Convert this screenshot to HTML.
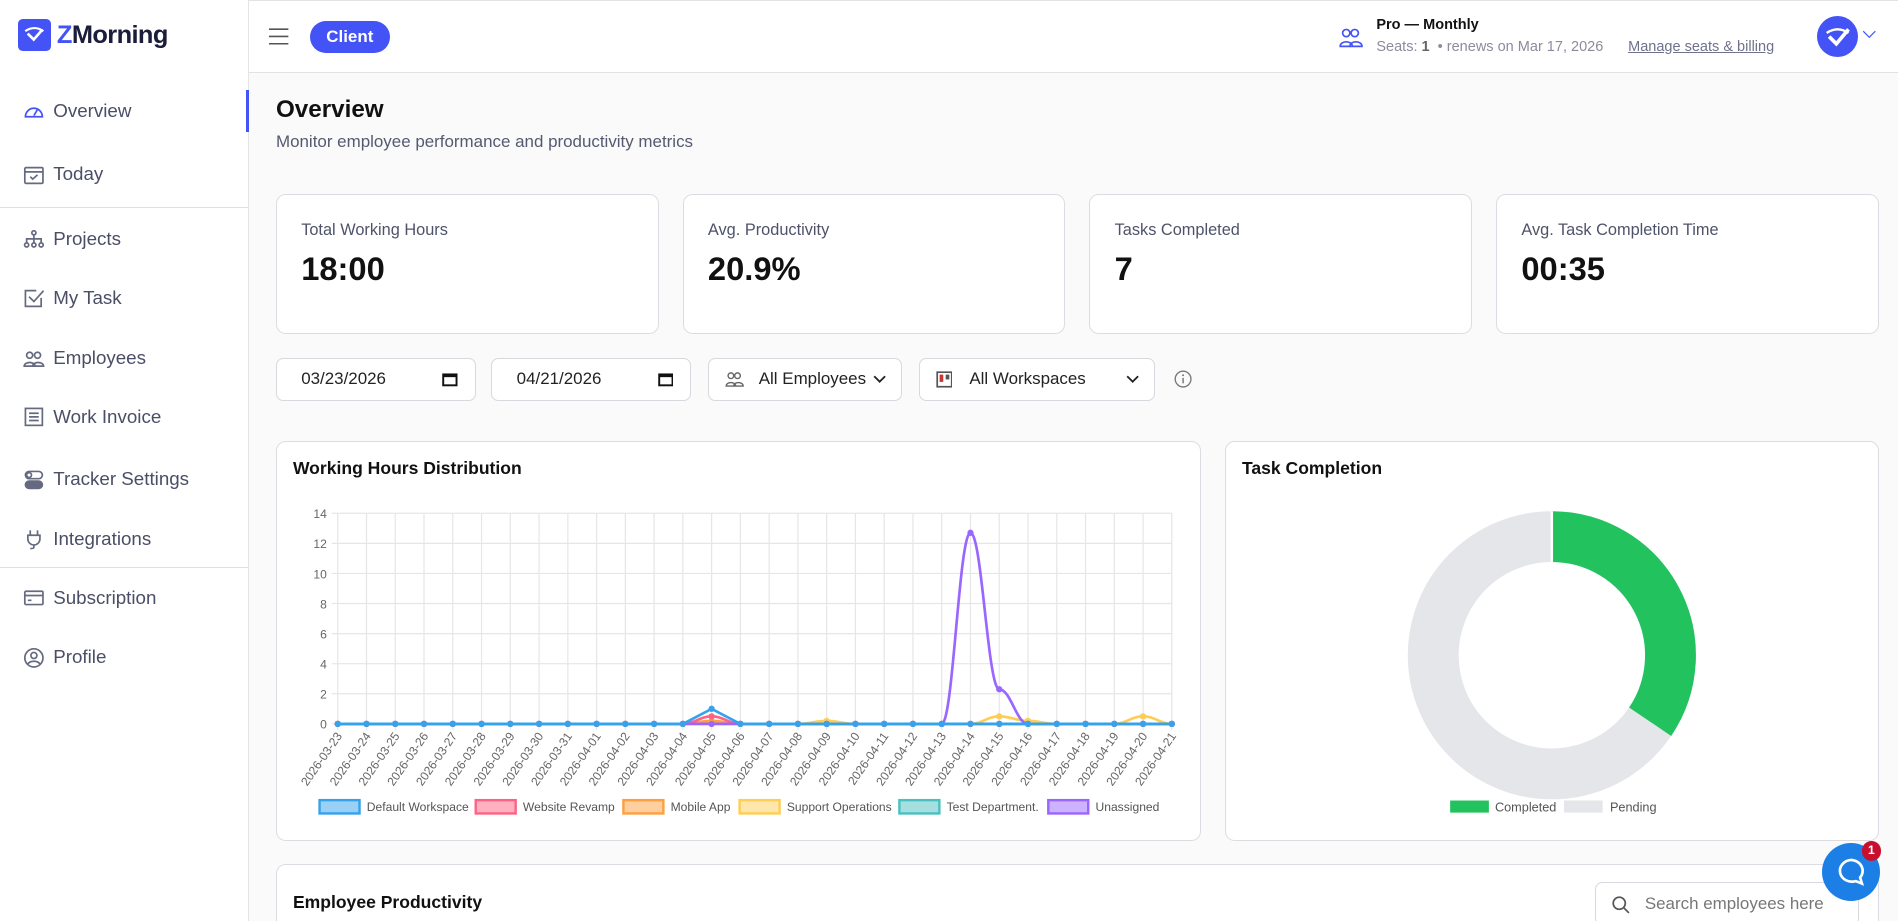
<!DOCTYPE html>
<html><head><meta charset="utf-8">
<style>
*{box-sizing:border-box;margin:0;padding:0}
html,body{width:1898px;height:921px;overflow:hidden;background:#fafafa}
#w{zoom:1.2105;width:1568px;height:761px;position:relative;font-family:"Liberation Sans",Arial,sans-serif;color:#111;background:#fafafa;overflow:hidden}
.abs{position:absolute}
#side{left:0;top:0;width:206px;height:761px;background:#fff;border-right:1px solid #e3e3e8}
.nav{position:absolute;left:19px;display:flex;align-items:center;font-size:15.5px;color:#4a4e66}
.nav svg{width:18px;height:18px;margin-right:7px;fill:none;stroke:#666a80;stroke-width:1.4}
.hr{position:absolute;left:0;width:206px;border-top:1px solid #dedee4}
#top{left:206px;top:1px;width:1362px;height:59px;background:#fff;border-bottom:1px solid #e2e2e6}
.card{position:absolute;background:#fff;border:1px solid #dcdce2;border-radius:8px}
.lbl{font-size:13.5px;color:#4f536a}
.val{font-size:27px;font-weight:bold;color:#111}
.inp{position:absolute;top:296px;height:35px;background:#fff;border:1px solid #d8d8de;border-radius:6px;font-size:14px;color:#222;display:flex;align-items:center}
</style></head><body><div id="w">
<div style="position:absolute;left:0;top:0;width:1568px;height:1px;background:#e3e3e3"></div>
<div id="side" class="abs">
  <div class="abs" style="left:15px;top:16px;width:27px;height:26px;background:#4353f6;border-radius:4px">
    <svg width="27" height="26" viewBox="0 0 27 26"><path d="M6 10 Q13.5 5 21 10" stroke="#fff" stroke-width="1.8" fill="none"/><path d="M8 12 L13 17 L20 9" stroke="#fff" stroke-width="2.2" fill="none"/></svg>
  </div>
  <div class="abs" style="left:47px;top:17px;font-size:21px;font-weight:bold;color:#1b1d3a;letter-spacing:-0.5px"><span style="color:#4353f6">Z</span>Morning</div>
  <div class="abs" style="left:203px;top:74px;width:3px;height:35px;background:#4353f6"></div>
  <div class="nav" style="top:83px"><svg viewBox="0 0 18 18" style="stroke:#4353f6"><path d="M2 13 A7 7 0 1 1 16 13 Z"/><path d="M9 12 L12 7"/></svg>Overview</div>
  <div class="nav" style="top:135px"><svg viewBox="0 0 18 18"><rect x="1.5" y="3" width="15" height="13" rx="1"/><path d="M1.5 6.5H16.5M6 10.5l2 2 4-3.5"/></svg>Today</div>
  <div class="hr" style="top:171px"></div>
  <div class="nav" style="top:188px"><svg viewBox="0 0 18 18"><circle cx="9" cy="4" r="1.7"/><circle cx="3" cy="14" r="1.7"/><circle cx="9" cy="14" r="1.7"/><circle cx="15" cy="14" r="1.7"/><path d="M9 6v6M3 12V9h12v3"/></svg>Projects</div>
  <div class="nav" style="top:237px"><svg viewBox="0 0 18 18"><path d="M15 9v7H2V3h9"/><path d="M5 8l4 4 8-9"/></svg>My Task</div>
  <div class="nav" style="top:287px"><svg viewBox="0 0 18 18"><circle cx="5.5" cy="6" r="2.5"/><circle cx="12" cy="6" r="2.5"/><path d="M1 15c0-4 9-4 9 0zM8 15c0-4 9-4 9 0z"/></svg>Employees</div>
  <div class="nav" style="top:335px"><svg viewBox="0 0 18 18"><rect x="2" y="2" width="14" height="14"/><path d="M5 6h8M5 9h8M5 12h8"/></svg>Work Invoice</div>
  <div class="nav" style="top:387px"><svg viewBox="0 0 18 18"><rect x="2" y="2" width="14" height="6" rx="3"/><rect x="2" y="10" width="14" height="6" rx="3" fill="#666a80"/><circle cx="5" cy="5" r="2"/></svg>Tracker Settings</div>
  <div class="nav" style="top:436px"><svg viewBox="0 0 18 18"><path d="M6 2v4M12 2v4M4 6h10v3a5 5 0 0 1-10 0zM9 14v2c0 1-2 1-3 1"/></svg>Integrations</div>
  <div class="hr" style="top:468px"></div>
  <div class="nav" style="top:485px"><svg viewBox="0 0 18 18"><rect x="1.5" y="3.5" width="15" height="11" rx="1"/><path d="M1.5 7h15M4 11h3"/></svg>Subscription</div>
  <div class="nav" style="top:534px"><svg viewBox="0 0 18 18"><circle cx="9" cy="9" r="7.5"/><circle cx="9" cy="7" r="2.5"/><path d="M4 14c2-3 8-3 10 0"/></svg>Profile</div>
</div>
<div id="top" class="abs">
  <svg class="abs" style="left:16px;top:22px" width="17" height="14"><path d="M0 1h16M0 7h16M0 13h16" stroke="#555" stroke-width="1.3"/></svg>
  <div class="abs" style="left:50px;top:16px;width:66px;height:27px;background:#4353f6;border-radius:14px;color:#fff;font-weight:bold;font-size:14px;text-align:center;line-height:27px">Client</div>
  <svg class="abs" style="left:900px;top:21px" width="20" height="18" viewBox="0 0 20 18" fill="none" stroke="#4353f6" stroke-width="1.4"><circle cx="6" cy="5" r="3"/><circle cx="13" cy="5" r="3"/><path d="M1 16c0-5 10-5 10 0zM9 16c0-5 10-5 10 0z"/></svg>
  <div class="abs" style="left:931px;top:13px;font-size:12px;font-weight:bold;color:#111">Pro — Monthly</div>
  <div class="abs" style="left:931px;top:31px;font-size:12px;color:#8a8c9c">Seats: <b style="color:#666">1</b> &nbsp;• renews on Mar 17, 2026</div>
  <div class="abs" style="left:1139px;top:31px;font-size:12px;color:#70728a;text-decoration:underline">Manage seats &amp; billing</div>
  <div class="abs" style="left:1295px;top:12px;width:34px;height:34px;border-radius:50%;background:#4353f6">
    <svg width="34" height="34" viewBox="0 0 34 34"><path d="M8 14 Q17 8 26 14" stroke="#fff" stroke-width="2" fill="none"/><path d="M10 17 L16 23 L26 11" stroke="#fff" stroke-width="3" fill="none"/></svg>
  </div>
  <svg class="abs" style="left:1332px;top:24px" width="12" height="8"><path d="M1 1l5 5 5-5" stroke="#4353f6" fill="none"/></svg>
</div>

<div class="abs" style="left:228px;top:79px;font-size:20px;font-weight:bold">Overview</div>
<div class="abs" style="left:228px;top:109px;font-size:14px;color:#555a70">Monitor employee performance and productivity metrics</div>

<div class="card" style="left:228px;top:160px;width:316px;height:116px"><div class="lbl abs" style="left:20px;top:22px">Total Working Hours</div><div class="val abs" style="left:20px;top:46px">18:00</div></div>
<div class="card" style="left:564px;top:160px;width:316px;height:116px"><div class="lbl abs" style="left:20px;top:22px">Avg. Productivity</div><div class="val abs" style="left:20px;top:46px">20.9%</div></div>
<div class="card" style="left:900px;top:160px;width:316px;height:116px"><div class="lbl abs" style="left:20px;top:22px">Tasks Completed</div><div class="val abs" style="left:20px;top:46px">7</div></div>
<div class="card" style="left:1236px;top:160px;width:316px;height:116px"><div class="lbl abs" style="left:20px;top:22px">Avg. Task Completion Time</div><div class="val abs" style="left:20px;top:46px">00:35</div></div>

<div class="inp" style="left:228px;width:165px;padding-left:20px">03/23/2026<svg style="position:absolute;right:14px" width="13" height="12"><rect x="1" y="2" width="11" height="9" fill="none" stroke="#111" stroke-width="1.6"/><path d="M1 3h11" stroke="#111" stroke-width="2.5"/></svg></div>
<div class="inp" style="left:406px;width:165px;padding-left:20px">04/21/2026<svg style="position:absolute;right:14px" width="13" height="12"><rect x="1" y="2" width="11" height="9" fill="none" stroke="#111" stroke-width="1.6"/><path d="M1 3h11" stroke="#111" stroke-width="2.5"/></svg></div>
<div class="inp" style="left:585px;width:160px;padding-left:13px"><svg width="16" height="14" viewBox="0 0 20 18" fill="none" stroke="#666" stroke-width="1.5"><circle cx="6" cy="5" r="3"/><circle cx="13" cy="5" r="3"/><path d="M1 16c0-5 10-5 10 0zM9 16c0-5 10-5 10 0z"/></svg><span style="margin-left:12px">All Employees</span><svg style="position:absolute;right:12px" width="11" height="7"><path d="M1 1l4.5 4.5L10 1" stroke="#222" stroke-width="1.5" fill="none"/></svg></div>
<div class="inp" style="left:759px;width:195px;padding-left:13px"><svg width="14" height="14"><rect x="1" y="1" width="12" height="12" fill="none" stroke="#555" stroke-width="1.4"/><rect x="3" y="3" width="3" height="6" fill="#c33"/><rect x="8" y="3" width="3" height="4" fill="#555"/></svg><span style="margin-left:14px">All Workspaces</span><svg style="position:absolute;right:12px" width="11" height="7"><path d="M1 1l4.5 4.5L10 1" stroke="#222" stroke-width="1.5" fill="none"/></svg></div>
<svg class="abs" style="left:970px;top:306px" width="15" height="15"><circle cx="7.5" cy="7.5" r="6.5" fill="none" stroke="#777" stroke-width="1.1"/><path d="M7.5 6.5v4.5" stroke="#777" stroke-width="1.2"/><circle cx="7.5" cy="4.3" r="0.8" fill="#777"/></svg>

<div class="card" style="left:228px;top:364px;width:764px;height:331px"></div>
<div class="abs" style="left:242px;top:378px;font-size:14.5px;font-weight:bold;color:#111">Working Hours Distribution</div>
<svg class="abs" style="left:0;top:0" width="1568" height="761" font-family="Liberation Sans, Arial, sans-serif">
<g id="grid" stroke="#e6e6e6" stroke-width="1"></g>
<g id="plot"></g>
</svg>

<div class="card" style="left:1012px;top:364px;width:540px;height:331px"></div>
<div class="abs" style="left:1026px;top:378px;font-size:14.5px;font-weight:bold;color:#111">Task Completion</div>
<svg class="abs" style="left:1012px;top:364px" width="540" height="331">
<circle cx="270" cy="177" r="98" fill="none" stroke="#e5e6ea" stroke-width="42"/>
<path d="M270 79 A98 98 0 0 1 351.2 231.9" fill="none" stroke="#22c35e" stroke-width="42"/>
<path d="M270 58 V100" stroke="#fff" stroke-width="2"/>
<rect x="186" y="297" width="32" height="10" fill="#22c35e"/>
<text x="223" y="306" font-size="10.5" fill="#555" font-family="Liberation Sans, Arial, sans-serif">Completed</text>
<rect x="280" y="297" width="32" height="10" fill="#e5e6ea"/>
<text x="318" y="306" font-size="10.5" fill="#555" font-family="Liberation Sans, Arial, sans-serif">Pending</text>
</svg>

<div class="card" style="left:228px;top:714px;width:1324px;height:80px"></div>
<div class="abs" style="left:242px;top:737px;font-size:14.5px;font-weight:bold">Employee Productivity</div>
<div class="abs" style="left:1318px;top:729px;width:218px;height:36px;background:#fff;border:1px solid #d8d8de;border-radius:6px;font-size:14px;color:#777;padding:9px 0 0 40px">Search employees here
<svg style="position:absolute;left:13px;top:10px" width="15" height="15"><circle cx="6" cy="6" r="5" fill="none" stroke="#555" stroke-width="1.4"/><path d="M10 10l4 4" stroke="#555" stroke-width="1.4"/></svg></div>

<div class="abs" style="left:1505px;top:696px;width:48px;height:48px;border-radius:50%;background:#1c7fe6">
<svg width="48" height="48"><path d="M24 14a10 9 0 1 0 4 17.5l5 2-1.5-5A10 9 0 0 0 24 14z" fill="none" stroke="#fff" stroke-width="2.2"/></svg></div>
<div class="abs" style="left:1538px;top:695px;width:16px;height:16px;border-radius:50%;background:#c8102e;color:#fff;font-size:10px;text-align:center;line-height:16px;font-weight:bold">1</div>

<script>
(function(){
var ns="http://www.w3.org/2000/svg";
var g=document.getElementById('grid'),p=document.getElementById('plot');
function el(t,a,par,txt){var e=document.createElementNS(ns,t);for(var k in a)e.setAttribute(k,a[k]);if(txt!=null)e.textContent=txt;(par||p).appendChild(e);return e;}
var x0=279,dx=23.76,yb=598,sy=174/14;
function X(i){return x0+i*dx}function Y(v){return yb-v*sy}
for(var v=0;v<=14;v+=2){el('line',{x1:274,x2:968,y1:Y(v),y2:Y(v)},g);el('text',{x:270,y:Y(v)+4,'text-anchor':'end','font-size':10,fill:'#666'},p,v);}
var dates=[];for(var d=23;d<=31;d++)dates.push('2026-03-'+d);for(d=1;d<=21;d++)dates.push('2026-04-'+(d<10?'0'+d:d));
for(var i=0;i<30;i++){el('line',{x1:X(i),x2:X(i),y1:424,y2:603},g);
el('text',{x:0,y:0,'text-anchor':'end','font-size':10,fill:'#666',transform:'translate('+(X(i)+4)+','+(yb+10)+') rotate(-55)'},p,dates[i]);}
function series(vals,col,smooth){var pts=[];for(var i=0;i<30;i++)pts.push([X(i),Y(vals[i]||0)]);
var d='M'+pts[0][0]+' '+pts[0][1];
for(i=1;i<30;i++){if(smooth){var a=pts[i-1],b=pts[i];var c=dx*0.4;d+=' C'+(a[0]+c)+' '+a[1]+' '+(b[0]-c)+' '+b[1]+' '+b[0]+' '+b[1];}else d+=' L'+pts[i][0]+' '+pts[i][1];}
el('path',{d:d,fill:'none',stroke:col,'stroke-width':2.2});
for(i=0;i<30;i++)el('circle',{cx:pts[i][0],cy:pts[i][1],r:2.6,fill:col});}
series({13:0.2},'#ff9f40',true);
series({17:0.2,22:0,23:0.5,24:0.2,28:0.5},'#ffcd56',true);
series({13:0.5},'#ff6384',true);
series({22:12.7,23:2.3},'#9966ff',true);
series({13:1.0},'#36a2eb',false);
var leg=[['Default Workspace','#36a2eb','#9ad0f5',264],['Website Revamp','#ff6384','#ffb1c1',393],['Mobile App','#ff9f40','#ffcf9f',515],['Support Operations','#ffcd56','#ffe6aa',611],['Test Department.','#4bc0c0','#a5dfdf',743],['Unassigned','#9966ff','#ccb2ff',866]];
leg.forEach(function(l){el('rect',{x:l[3],y:661,width:33,height:11,fill:l[2],stroke:l[1],'stroke-width':2});el('text',{x:l[3]+39,y:670,'font-size':10,fill:'#555'},p,l[0]);});
})();
</script>
</div></body></html>
